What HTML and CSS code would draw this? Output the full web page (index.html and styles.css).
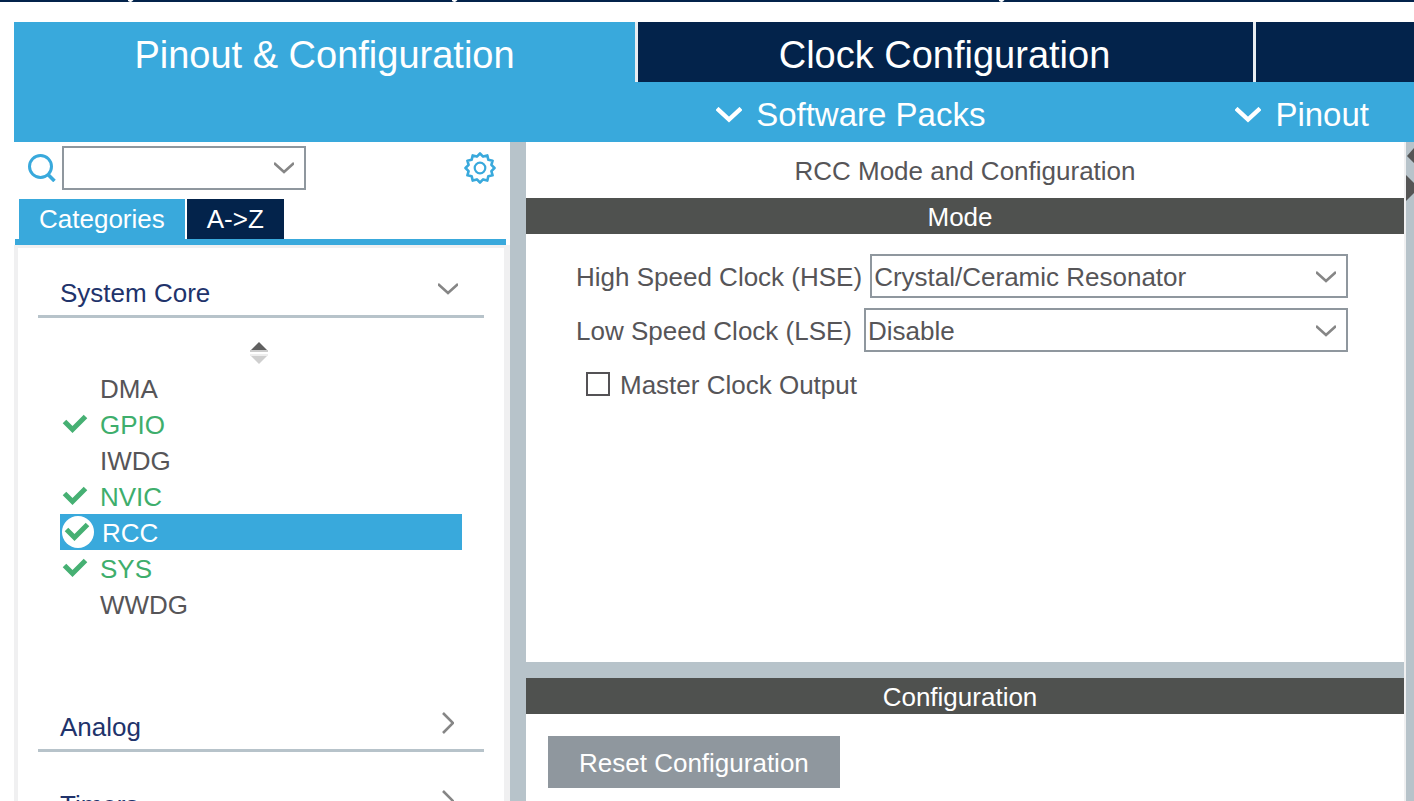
FILE: index.html
```html
<!DOCTYPE html>
<html lang="en">
<head>
<meta charset="utf-8">
<title>Pinout &amp; Configuration</title>
<link rel="stylesheet" href="styles.css">
</head>
<body>
<svg width="0" height="0" class="defs" aria-hidden="true">
  <symbol id="tick" viewBox="0 0 26 20"><path d="M2.500 7.500L10.500 15.500L23.500 2.500" fill="none" stroke="#46b073" stroke-width="5"/></symbol>
  <symbol id="down" viewBox="0 0 20 12"><path d="M0 1L10 10L20 1" fill="none" stroke="#868686" stroke-width="2.600"/></symbol>
  <symbol id="right" viewBox="0 0 12 22"><path d="M1 1L11 11L1 21" fill="none" stroke="#868686" stroke-width="2.600"/></symbol>
  <symbol id="menu" viewBox="0 0 26 16"><path d="M1 1.500L13 12.500L25 1.500" fill="none" stroke="#fff" stroke-width="4.400"/></symbol>
  <symbol id="tail" viewBox="0 0 6 2"><path d="M0 0H5.500L4 1.500Q2.500 2.500 0 1Z" fill="#fff"/></symbol>
</svg>
<div class="app">
  <header class="topbar">
    <svg class="tail"><use href="#tail"/></svg>
    <svg class="tail"><use href="#tail"/></svg>
    <svg class="tail"><use href="#tail"/></svg>
  </header>
  <div class="window">
    <nav class="tabs">
      <button class="tab tab-active">Pinout &amp; Configuration</button>
      <button class="tab">Clock Configuration</button>
      <button class="tab" aria-label="Next tab"></button>
    </nav>
    <div class="menubar">
      <button class="menu"><svg class="menu-icon"><use href="#menu"/></svg>Software Packs</button>
      <button class="menu"><svg class="menu-icon"><use href="#menu"/></svg>Pinout</button>
    </div>
    <div class="workspace">
      <aside class="sidebar">
        <div class="search">
          <label for="find" aria-label="Search"><svg class="search-icon" viewBox="0 0 28 28"><circle cx="12.500" cy="12.500" r="11" fill="none" stroke="#39a9dc" stroke-width="3"/><path d="M19.500 20L26.500 27" stroke="#39a9dc" stroke-width="3.600"/></svg></label>
          <div class="combo">
            <input id="find" class="combo-input" type="text">
            <button class="combo-button" aria-label="Show"><svg class="down"><use href="#down"/></svg></button>
          </div>
          <button class="settings" aria-label="Settings">
            <svg class="gear" viewBox="0 0 32 32" fill="none" stroke="#39a9dc" stroke-linejoin="round"><circle cx="16" cy="16" r="5.300" stroke-width="2.200"/><path stroke-width="2.600" d="M30.500 16L27.400 19.100L28.600 23.300L24.300 24.300L23.300 28.600L19.100 27.400L16 30.500L12.900 27.400L8.700 28.600L7.700 24.300L3.400 23.300L4.600 19.100L1.500 16L4.600 12.900L3.400 8.700L7.700 7.700L8.700 3.400L12.900 4.600L16 1.500L19.100 4.600L23.300 3.400L24.300 7.700L28.600 8.700L27.400 12.900Z"/></svg>
          </button>
        </div>
        <div class="views">
          <button class="view view-active">Categories</button>
          <button class="view">A-&gt;Z</button>
        </div>
        <div class="tree">
          <button class="group"><span>System Core</span><svg class="down"><use href="#down"/></svg></button>
          <div class="sort"><svg width="18" height="22" viewBox="0 0 18 22"><path d="M9 0L17 8H1Z" fill="#606060"/><path d="M0 9H18" stroke="#ccc" stroke-width="2"/><path d="M0 13H18" stroke="#eee" stroke-width="2"/><path d="M1 14H17L9 22Z" fill="#cfcfcf"/></svg></div>
          <ul class="items">
            <li class="item"><span class="mark"></span>DMA</li>
            <li class="item item-ok"><span class="mark"><svg class="tick"><use href="#tick"/></svg></span>GPIO</li>
            <li class="item"><span class="mark"></span>IWDG</li>
            <li class="item item-ok"><span class="mark"><svg class="tick"><use href="#tick"/></svg></span>NVIC</li>
            <li class="item item-selected"><span class="mark mark-round"><svg class="tick"><use href="#tick"/></svg></span>RCC</li>
            <li class="item item-ok"><span class="mark"><svg class="tick"><use href="#tick"/></svg></span>SYS</li>
            <li class="item"><span class="mark"></span>WWDG</li>
          </ul>
          <button class="group"><span>Analog</span><svg class="right"><use href="#right"/></svg></button>
          <button class="group"><span>Timers</span><svg class="right"><use href="#right"/></svg></button>
        </div>
      </aside>
      <main class="editor">
        <section class="mode">
          <h1 class="title">RCC Mode and Configuration</h1>
          <h2 class="band">Mode</h2>
          <div class="form">
            <div class="field"><label for="hse">High Speed Clock (HSE)</label>
              <div class="pick"><select id="hse" class="select"><option>Crystal/Ceramic Resonator</option></select><svg class="down pick-arrow"><use href="#down"/></svg></div></div>
            <div class="field field-lse"><label for="lse">Low Speed Clock (LSE)</label>
              <div class="pick"><select id="lse" class="select"><option>Disable</option></select><svg class="down pick-arrow"><use href="#down"/></svg></div></div>
            <div class="check"><input id="mco" class="box" type="checkbox"><label for="mco">Master Clock Output</label></div>
          </div>
        </section>
        <section class="config">
          <h2 class="band">Configuration</h2>
          <button class="reset">Reset Configuration</button>
        </section>
      </main>
      <div class="splitter"><svg width="8" height="60" viewBox="0 0 8 60"><path d="M8 6L1 14L8 21ZM0 33L8 41V51L0 59Z" fill="#555"/></svg></div>
    </div>
  </div>
</div>
</body>
</html>
```
FILE: styles.css
```css
* { box-sizing: border-box; }
body {
  margin: 0;
  background: #fff;
  color: #565558;
  font: 26px/36px "Liberation Sans", Arial, sans-serif;
}
button, input, select { font: inherit; color: inherit; border: 0; border-radius: 0; padding: 0; margin: 0; background: none; }
svg { display: block; flex: none; }
h1, h2, ul { margin: 0; padding: 0; font-weight: normal; font-size: inherit; }
.defs { position: absolute; }
.app { height: 100vh; overflow: hidden; display: flex; flex-direction: column; }
.topbar { flex: none; height: 2px; background: #03234b; display: grid; grid-template-columns: 324fr 546fr 415fr; padding-left: 128px; }
.tail { width: 6px; height: 2px; }
.window { flex: 1; min-height: 0; display: flex; flex-direction: column; margin: 20px 0 0 14px; }
.tabs { flex: none; display: grid; grid-template-columns: 621fr 618fr 161fr; height: 60px; }
.tab { background: #03234b; color: #fff; font-size: 38px; border-left: 3px solid #e8edf1; padding: 6px 2px 0 0; white-space: nowrap; }
.tab-active { background: #39a9dc; border-left: 0; padding-right: 0; }
.menubar { flex: none; height: 60px; background: #39a9dc; display: flex; justify-content: flex-end; gap: 250px; padding-right: 45px; }
.menu { color: #fff; font-size: 33px; display: flex; align-items: center; gap: 14px; padding-top: 5px; white-space: nowrap; }
.menu-icon { width: 26px; height: 16px; }
.workspace { flex: 1; min-height: 0; display: flex; }
.sidebar { flex: none; width: 496px; display: flex; flex-direction: column; }
.search { flex: none; height: 57px; display: flex; align-items: flex-start; padding: 4px 14px 0; gap: 6px; }
.search-icon { width: 28px; height: 28px; margin-top: 8px; }
.combo { width: 244px; height: 44px; border: 2px solid #8f979e; display: flex; }
.combo-input { flex: 1; min-width: 0; outline: 0; }
.combo-button { width: 40px; display: grid; place-items: center; }
.down { width: 20px; height: 12px; }
.right { width: 12px; height: 22px; }
.settings { margin: 6px 0 0 auto; }
.gear { width: 32px; height: 32px; }
.views { flex: none; display: flex; gap: 2px; padding-left: 4px; height: 46px; border-bottom: 6px solid #39a9dc; margin: 0 4px 0 1px; }
.view { background: #03234b; color: #fff; padding: 0 20px; }
.view-active { background: #39a9dc; }
.tree { flex: 1; min-height: 0; overflow: hidden; border: solid #f0f0f1; border-width: 3px 6px 0 4px; padding: 23px 20px 0; }
.group { width: 100%; display: flex; justify-content: space-between; align-items: center; height: 47px; color: #21336b; border-bottom: 3px solid #b7c3ca; padding: 0 26px 0 22px; margin-bottom: 31px; }
.group .down, .group .right { margin-bottom: 8px; }
.group .right { margin-right: 4px; }
.sort { height: 52px; margin-top: -31px; display: flex; justify-content: center; align-items: center; padding: 18px 4px 0 0; }
.items { list-style: none; margin: 0 22px 83px; }
.item { height: 36px; display: flex; align-items: center; gap: 8px; padding-top: 2px; }
.item-ok { color: #3eae6c; }
.item-selected { background: #39a9dc; color: #fff; padding-left: 2px; }
.mark { width: 32px; height: 32px; display: flex; align-items: center; padding-left: 2px; margin-top: -2px; }
.mark-round { background: #fff; border-radius: 50%; }
.tick { width: 26px; height: 20px; }
.editor { flex: 1; min-width: 0; display: flex; flex-direction: column; border-left: 16px solid #b7c3ca; }
.mode { flex: none; min-height: 520px; }
.title { text-align: center; height: 56px; padding-top: 11px; }
.band { background: #4f514f; color: #fff; text-align: center; padding-right: 10px; padding-top: 2px; line-height: 34px; }
.form { display: flex; flex-direction: column; gap: 10px; padding: 20px 56px 0 50px; }
.field { display: flex; align-items: center; gap: 8px; white-space: nowrap; height: 44px; }
.field label, .check label { padding-top: 2px; }
.field-lse { gap: 12px; }
.pick { flex: 1; display: grid; align-items: center; }
.select { grid-area: 1 / 1; width: 100%; height: 44px; appearance: none; border: 2px solid #8f979e; padding: 2px 0 0 2px; background: #fff; }
.pick-arrow { grid-area: 1 / 1; justify-self: end; margin: 2px 12px 0 0; pointer-events: none; }
.check { display: flex; align-items: center; gap: 10px; padding-left: 10px; height: 44px; }
.box { appearance: none; width: 24px; height: 24px; border: 2px solid #545255; }
.config { border-top: 16px solid #b7c3ca; flex: 1; }
.reset { display: block; background: #8f979e; color: #fff; height: 52px; padding: 2px 31px 0; margin: 22px 0 0 22px; }
.splitter { flex: none; width: 10px; background: #b7c3ca; border-left: 2px solid #f0f0f1; }
```
